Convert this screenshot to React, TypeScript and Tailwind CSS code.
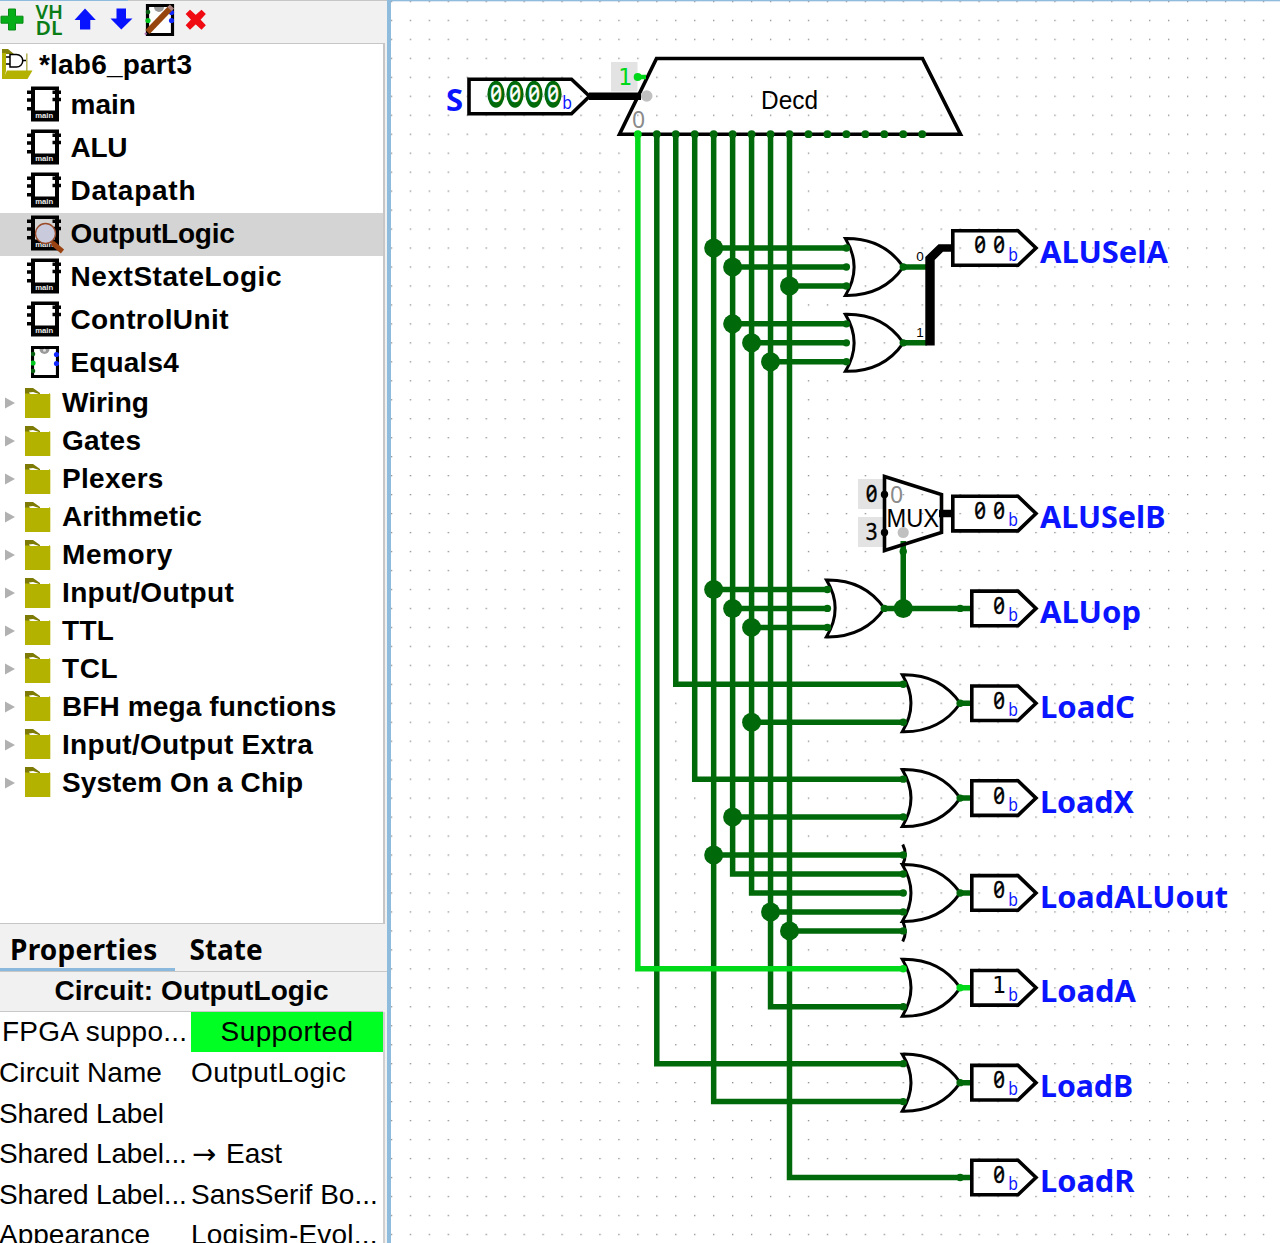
import React from "react";

const GREEN = "#00690a";
const LIME = "#00d81a";
const BLUE = "#0a14ff";

const gx = (k: number) => 391.4 + 18.957 * k;
const gy = (k: number) => 1.4 + 18.969 * k;

/* ---------- sidebar icons ---------- */

function ChipIcon({ lens = false }: { lens?: boolean }) {
  return (
    <svg width="40" height="40" viewBox="0 0 40 40" className="block shrink-0">
      <path d="M4 1.500h28v35H4z" fill="#000" />
      <path d="M8 5h20v20.500H8z" fill={lens ? "#d4d4d4" : "#fff"} />
      <path d="M0 7.300h5M0 15h5M0 23.700h5M25.500 7.300h8.500M25.500 14.500h8.500" stroke="#000" strokeWidth="3.600" />
      <text x="17.200" y="32.700" textAnchor="middle" fontFamily="Liberation Sans" fontWeight="700" fontSize="8" textLength="18" lengthAdjust="spacingAndGlyphs" fill="#eee">
        main
      </text>
      {lens && (
        <g>
          <path d="M25.500 29l10 8.500" stroke="#9a4312" strokeWidth="5" />
          <path d="M23 26.500l5 4" stroke="#9a4312" strokeWidth="3" />
          <circle cx="18.500" cy="19.500" r="10" fill="#c9cbdc" stroke="#9a4a28" strokeWidth="1.300" />
        </g>
      )}
    </svg>
  );
}

function VhdlChip() {
  return (
    <svg width="28" height="32" viewBox="0 0 28 32" className="block shrink-0">
      <path d="M1.500 1.500h25v29h-25z" fill="#fff" stroke="#000" strokeWidth="3.200" />
      <path d="M8.500 3a5 5 0 0 0 10 0z" fill="#999" />
      <circle cx="13.500" cy="4.300" r="1.500" fill="#ddd" />
      <circle cx="2" cy="8" r="2.300" fill="#075f12" />
      <circle cx="2" cy="17" r="2.600" fill="#00c81e" />
      <circle cx="2" cy="25" r="2.300" fill="#075f12" />
      <circle cx="25.500" cy="8.500" r="2.600" fill="#1028ff" />
      <circle cx="25.500" cy="17.500" r="2.600" fill="#1028ff" />
    </svg>
  );
}

function FolderIcon() {
  return (
    <svg width="26" height="31" viewBox="0 0 26 31" className="block shrink-0">
      <path d="M0 0h8l7 5v3H0z" fill="#7d7a05" />
      <path d="M4 4.500l4-.5 6 2-9 .5z" fill="#fff" />
      <path d="M0 5.500h3l3 .5h18l.5-1 .8 1V30H0z" fill="#b4b200" />
    </svg>
  );
}

function ProjectIcon() {
  return (
    <svg width="32" height="32" viewBox="0 0 32 32" className="block shrink-0">
      <path d="M0 1h6l6 5v17H0z" fill="#85820a" />
      <path d="M4 6h20v18H4z" fill="#fff" />
      <path d="M24.800 5.500V24" stroke="#b9b660" strokeWidth="1.600" />
      <path d="M0 31V5h4v18l-2 8z" fill="#b4b200" />
      <path d="M5 22.500h25.500L25.500 31H1z" fill="#b4b200" />
      <path d="M8 6.500h6.500a6 6 0 0 1 0 12.500H8z" fill="#fff" stroke="#000" strokeWidth="1.500" />
      <path d="M4 9h4M4 16h4M20.500 12.500H24" stroke="#000" strokeWidth="1.400" />
    </svg>
  );
}

function Toolbar() {
  return (
    <svg width="384" height="42" viewBox="0 0 384 42" className="block">
      <path d="M8.500 8h7v7.200h7.500v7h-7.500V29h-7v-6.800H1v-7h7.500z" fill="#06ae18" stroke="#078a14" strokeWidth="1" />
      <g fontFamily="Noto Sans" fontWeight="600" fontSize="19" fill="#0a7d17">
        <text x="35.500" y="17.500" textLength="27.500" lengthAdjust="spacingAndGlyphs">VH</text>
        <text x="35.500" y="33.500" textLength="27" lengthAdjust="spacingAndGlyphs">DL</text>
      </g>
      <path d="M85 7.500L95.800 19h-5.500v9.500H80V19h-5.500z" fill="#0712ff" />
      <path d="M121.300 28.500L110.500 17.500h6V7.500H126v10h6.500z" fill="#0712ff" />
      <g transform="translate(146 3)">
        <path d="M1.500 1.500h25v29h-25z" fill="#fff" stroke="#000" strokeWidth="3.200" />
        <path d="M8 3a5 5 0 0 0 10 0z" fill="#999" />
        <circle cx="2" cy="8" r="2.300" fill="#075f12" />
        <circle cx="2" cy="16.500" r="2.600" fill="#00c81e" />
        <circle cx="25.500" cy="8.500" r="2.600" fill="#1028ff" />
        <circle cx="25.500" cy="16.500" r="2.600" fill="#1028ff" />
        <path d="M1.500 28L24.500 4" stroke="#96450f" strokeWidth="6" />
        <path d="M23.500 5l2.500-2.500" stroke="#a9807c" strokeWidth="6" />
        <path d="M-1 30.500l1.500-1.500" stroke="#b06ab0" strokeWidth="2" />
      </g>
      <path d="M190 9.500L195.700 14.800L201.500 9.500L205 13L199.800 18.700L205 24.300L201.500 27.800L195.700 22.500L190 27.800L186.500 24.300L191.700 18.700L186.500 13z" fill="#f00a12" stroke="#f00a12" strokeWidth="1.200" />
    </svg>
  );
}

/* ---------- sidebar ---------- */

/* name and letter spacing in px */
const circuits: [string, number][] = [
  ["main", 0],
  ["ALU", -0.3],
  ["Datapath", 0.75],
  ["OutputLogic", -0.2],
  ["NextStateLogic", 0.55],
  ["ControlUnit", 0.4],
  ["Equals4", 0.15],
];

const libraries: [string, number][] = [
  ["Wiring", 0], ["Gates", 0.3], ["Plexers", 0.3], ["Arithmetic", 0.15], ["Memory", 0.6],
  ["Input/Output", 0.35], ["TTL", 0.3], ["TCL", 0.6], ["BFH mega functions", 0.12],
  ["Input/Output Extra", 0.3], ["System On a Chip", 0.1],
];

function Tree() {
  return (
    <div className="h-[881px] w-[385px] shrink-0 overflow-hidden border-y border-r-2 border-[#c6c6c6] bg-white text-[28px] font-bold leading-none text-black">
      <div className="flex h-[39.500px] items-center pl-[2px]">
        <ProjectIcon />
        <span className="ml-[5px] pt-[2px] tracking-[0.2px]">*lab6_part3</span>
      </div>
      {circuits.map(([name, ls]) => (
        <div
          key={name}
          className={name === "OutputLogic" ? "flex h-[43px] items-center bg-[#d4d4d4]" : "flex h-[43px] items-center"}
        >
          <div className="flex w-[70.500px] shrink-0 pl-[27px]">
            {name === "Equals4" ? <div className="pb-[3px] pl-[4px]"><VhdlChip /></div> : <ChipIcon lens={name === "OutputLogic"} />}
          </div>
          <span style={{ letterSpacing: ls }}>{name}</span>
        </div>
      ))}
      {libraries.map(([name, ls]) => (
        <div key={name} className="flex h-[37.930px] items-center">
          <svg width="25" height="12" viewBox="0 0 25 12" className="block shrink-0">
            <path d="M5 0.500v11l10-5.500z" fill="#b1b1b1" />
          </svg>
          <FolderIcon />
          <span className="ml-[11px]" style={{ letterSpacing: ls }}>{name}</span>
        </div>
      ))}
    </div>
  );
}

/* key, its letter spacing, value, its letter spacing */
const props: [string, number, string, number][] = [
  ["Circuit Name", 0.1, "OutputLogic", 0.4],
  ["Shared Label", -0.15, "", 0],
  ["Shared Label...", -0.15, "→ East", 0],
  ["Shared Label...", -0.15, "SansSerif Bo...", 0],
  ["Appearance", 0, "Logisim-Evol...", 0.2],
];

function Value({ text, spacing }: { text: string; spacing: number }) {
  if (!text.startsWith("→")) return <span style={{ letterSpacing: spacing }}>{text}</span>;
  return (
    <span className="flex items-center">
      <span className="ml-px w-[34px] font-['DejaVu_Sans'] text-[29px]">→</span>
      <span>{text.slice(2)}</span>
    </span>
  );
}

function Properties() {
  return (
    <div className="flex flex-1 flex-col overflow-hidden text-black">
      <div className="flex h-[47.500px] shrink-0 border-b border-[#c8c8c8] font-['Noto_Sans'] text-[28px] font-bold leading-[50px]">
        <div className="h-[47px] w-[174.500px] border-b-[3px] border-[#8bb9dd] pl-[10px] tracking-[0.25px]">Properties</div>
        <div className="pl-[15px]">State</div>
      </div>
      <div className="flex h-[40px] w-[383px] shrink-0 items-center justify-center border-b border-[#c8c8c8] text-[28px] font-bold leading-none tracking-[0.1px]">
        Circuit: OutputLogic
      </div>
      <div className="w-[385px] border-r-2 border-[#d0d0d0] bg-white text-[28px] leading-none">
        <div className="flex h-[40.500px]">
          <div className="flex w-[191px] items-center whitespace-nowrap pl-[2px] tracking-[0.25px]">FPGA suppo...</div>
          <div className="flex flex-1 items-center justify-center bg-[#00ff22] tracking-[0.4px]">Supported</div>
        </div>
        {props.map(([k, kls, v, vls], i) => (
          <div key={i} className="flex h-[40.500px] items-center whitespace-nowrap pt-[2px]">
            <div className="w-[191px] shrink-0"><span className="-ml-px" style={{ letterSpacing: kls }}>{k}</span></div>
            <Value text={v} spacing={vls} />
          </div>
        ))}
      </div>
    </div>
  );
}

/* ---------- circuit drawing ---------- */

function Digit({ x, y, ch, fill = "#000" }: { x: number; y: number; ch: string; fill?: string }) {
  if (ch === "1") {
    return (
      <text x={x} y={y} textAnchor="middle" fontFamily="DejaVu Sans Mono" fontSize="23" fill={fill}>1</text>
    );
  }
  return (
    <text x={0} y={0} transform={`translate(${x} ${y}) scale(0.87 1)`} textAnchor="middle" fontFamily="Noto Sans" fontSize="23.500" fill={fill} stroke={fill} strokeWidth="0.400" style={{ fontFeatureSettings: '"zero"' }}>
      {ch}
    </text>
  );
}

function RadixMark({ x, y }: { x: number; y: number }) {
  return (
    <text x={0} y={0} transform={`translate(${x} ${y}) scale(0.9 1)`} textAnchor="middle" fontFamily="Noto Sans" fontSize="17.500" fill={BLUE}>b</text>
  );
}

function OutPin({ row, value, label, width }: { row: number; value: string; label: string; width: number }) {
  const y = gy(row);
  const left = value.length === 2 ? 952.8 : 971.8;
  return (
    <g>
      <path d={`M${left} ${y - 17.3}H1018L1036 ${y}L1018 ${y + 17.3}H${left}z`} fill="none" stroke="#000" strokeWidth="3.600" />
      {value.split("").map((c, i) => (
        <Digit key={i} x={999 - 19 * (value.length - 1 - i)} y={y + 5.5} ch={c} />
      ))}
      <RadixMark x={1013} y={y + 12.8} />
      <text x="1040" y={y + 14.7} textLength={width} lengthAdjust="spacingAndGlyphs" fontFamily="Noto Sans" fontWeight="700" fontSize="30" fill={BLUE}>
        {label}
      </text>
    </g>
  );
}

function OrGate({ col, row, out, extended = false, hot = false }: { col: number; row: number; out: number[]; extended?: boolean; hot?: boolean }) {
  const x = gx(col);
  const y = gy(row);
  const tip = x + 57;
  return (
    <g>
      <path d={`M${x - 1} ${y - 28.5}C${x + 28} ${y - 29} ${x + 46} ${y - 16} ${tip} ${y}C${x + 46} ${y + 16} ${x + 28} ${y + 29} ${x - 1} ${y + 28.5}Q${x + 16.5} ${y} ${x - 1} ${y - 28.5}z`} fill="none" stroke="#000" strokeWidth="3" />
      {extended && (
        <path d={`M${x - 0.5} ${y - 48.5}Q${x + 4.5} ${y - 39} ${x - 0.5} ${y - 28.5}M${x - 0.5} ${y + 48.5}Q${x + 4.5} ${y + 39} ${x - 0.5} ${y + 28.5}`} fill="none" stroke="#000" strokeWidth="3" />
      )}
      {out.map((d) => (
        <circle key={d} cx={x} cy={gy(row + d)} r="3.700" fill={hot && d < 0 ? LIME : GREEN} />
      ))}
      <circle cx={gx(col + 3)} cy={y} r="3.700" fill={hot ? LIME : GREEN} />
    </g>
  );
}

const H = (a: number, b: number, r: number) => `M${gx(a)} ${gy(r)}H${gx(b)}`;

const wires = [
  `M${gx(14)} ${gy(7)}V${gy(56)}H${gx(27)}`,
  `M${gx(15)} ${gy(7)}V${gy(36)}H${gx(27)}`,
  `M${gx(16)} ${gy(7)}V${gy(41)}H${gx(27)}`,
  `M${gx(17)} ${gy(7)}V${gy(58)}H${gx(27)}`,
  `M${gx(18)} ${gy(7)}V${gy(46)}H${gx(27)}`,
  `M${gx(19)} ${gy(7)}V${gy(47)}H${gx(27)}`,
  `M${gx(20)} ${gy(7)}V${gy(53)}H${gx(27)}`,
  `M${gx(21)} ${gy(7)}V${gy(62)}H971`,
  H(17, 24, 13), H(18, 24, 14), H(21, 24, 15),
  H(18, 24, 17), H(19, 24, 18), H(20, 24, 19),
  H(17, 23, 31), H(18, 23, 32), H(19, 23, 33),
  H(19, 27, 38), H(18, 27, 43), H(17, 27, 45), H(20, 27, 48), H(21, 27, 49),
  `M${gx(27)} ${gy(14)}H927`, `M${gx(27)} ${gy(18)}H927`,
  `M${gx(26)} ${gy(32)}H971`,
  `M${gx(27)} ${gy(32)}V541`,
  `M${gx(30)} ${gy(37)}H971`, `M${gx(30)} ${gy(42)}H971`,
  `M${gx(30)} ${gy(47)}H971`, `M${gx(30)} ${gy(57)}H971`,
].join("");

const junctions: [number, number][] = [
  [17, 13], [18, 14], [21, 15], [18, 17], [19, 18], [20, 19], [17, 31], [18, 32],
  [19, 33], [27, 32], [19, 38], [18, 43], [17, 45], [20, 48], [21, 49],
];

const outputs: [number, string, string, number][] = [
  [13, "00", "ALUSelA", 128], [27, "00", "ALUSelB", 125.500], [32, "0", "ALUop", 101],
  [37, "0", "LoadC", 95], [42, "0", "LoadX", 94], [47, "0", "LoadALUout", 188],
  [52, "1", "LoadA", 96], [57, "0", "LoadB", 93], [62, "0", "LoadR", 94.500],
];

function Canvas() {
  return (
    <svg width="889" height="1243" viewBox="391 0 889 1243" className="block">
      <defs>
        <pattern id="grid" x={gx(0) - 0.6} y={gy(0) - 0.6} width="18.957" height="18.969" patternUnits="userSpaceOnUse">
          <rect width="1.300" height="1.300" fill="#858585" />
        </pattern>
      </defs>
      <rect x="391" y="0" width="889" height="1243" fill="url(#grid)" />
      <rect x="391" y="0" width="889" height="1.300" fill="#8fbbdc" />

      {/* constants feeding the plexers */}
      <g fill="#e3e3e3">
        <rect x="611" y="62" width="26.500" height="29.500" />
        <rect x="858" y="479" width="26" height="30" />
        <rect x="858" y="517" width="26" height="30" />
      </g>

      <path d={wires} fill="none" stroke={GREEN} strokeWidth="5.500" />
      <path d={`M${gx(13)} ${gy(7)}V${gy(51)}H${gx(27)}M${gx(30)} ${gy(52)}H971`} fill="none" stroke={LIME} strokeWidth="5.500" />

      {/* decoder */}
      <path d="M656.500 58.500H922.500L960.500 134.200H619.500z" fill="none" stroke="#000" strokeWidth="3.600" />
      <path d="M637.700 77H646" stroke={LIME} strokeWidth="4.500" />
      <circle cx="637.700" cy="77" r="4" fill={LIME} />
      <circle cx="646.700" cy="96" r="5.800" fill="#c0c0c0" />
      <path d="M589 96.200H641" stroke="#000" strokeWidth="7.500" />
      <text x="789.500" y="109" textAnchor="middle" fontFamily="Liberation Sans" fontSize="25" textLength="57" lengthAdjust="spacingAndGlyphs">Decd</text>
      <text x="638.500" y="128" textAnchor="middle" fontFamily="Noto Sans" fontSize="23" fill="#8a8a8a">0</text>
      <text x="625" y="84.500" textAnchor="middle" fontFamily="DejaVu Sans Mono" fontSize="23" fill={LIME}>1</text>
      {Array.from({ length: 16 }, (_, i) => (
        <circle key={i} cx={gx(13 + i)} cy={gy(7)} r="3.900" fill={i === 0 ? LIME : GREEN} />
      ))}

      {/* selector input */}
      <path d="M469 79.200H571.500L589.500 96.200L571.500 113.800H469z" fill="none" stroke="#000" strokeWidth="3.600" />
      {[496, 515, 534, 553].map((x) => (
        <g key={x}>
          <ellipse cx={x} cy="94.200" rx="8.600" ry="13.500" fill={GREEN} />
          <Digit x={x} y={102} ch="0" fill="#fff" />
        </g>
      ))}
      <RadixMark x={567} y={109} />
      <text x="446" y="111" fontFamily="Noto Sans" fontWeight="700" fontSize="31" fill={BLUE}>S</text>

      {junctions.map(([a, b]) => (
        <circle key={`${a}-${b}`} cx={gx(a)} cy={gy(b)} r="9.500" fill={GREEN} />
      ))}
      <circle cx={gx(30)} cy={gy(32)} r="3.700" fill={GREEN} />
      <circle cx={gx(30)} cy={gy(62)} r="3.700" fill={GREEN} />

      <OrGate col={24} row={14} out={[-1, 0, 1]} />
      <OrGate col={24} row={18} out={[-1, 0, 1]} />
      <OrGate col={23} row={32} out={[-1, 0, 1]} />
      <OrGate col={27} row={37} out={[-1, 1]} />
      <OrGate col={27} row={42} out={[-1, 1]} />
      <OrGate col={27} row={47} out={[-2, -1, 0, 1, 2]} extended />
      <OrGate col={27} row={52} out={[-1, 1]} hot />
      <OrGate col={27} row={57} out={[-1, 1]} />

      {/* splitter */}
      <path d="M925.300 345.500V257L938.500 244.200H952V251.800H943L934.700 260V345.500z" fill="#000" />
      <text x="920" y="261" textAnchor="middle" fontFamily="Liberation Sans" fontSize="13.500">0</text>
      <text x="920" y="337" textAnchor="middle" fontFamily="Liberation Sans" fontSize="13.500">1</text>

      {/* multiplexer */}
      <circle cx="903.200" cy="532.500" r="5.600" fill="#c0c0c0" />
      <text x="896.500" y="503" textAnchor="middle" fontFamily="Noto Sans" fontSize="23" fill="#8a8a8a">0</text>
      <circle cx={gx(27)} cy={gy(29)} r="3.700" fill={GREEN} />
      <path d="M884.500 476.500L941.500 494.500V532.500L884.500 550.500z" fill="none" stroke="#000" strokeWidth="3.600" />
      <circle cx="884.500" cy="494.500" r="3.700" />
      <circle cx="884.500" cy="532.500" r="3.700" />
      <path d="M939 513.500H953" stroke="#000" strokeWidth="7.500" />
      <text x="886.500" y="526.500" fontFamily="Liberation Sans" fontSize="25" textLength="52.500" lengthAdjust="spacingAndGlyphs">MUX</text>
      <Digit x={871.5} y={502} ch="0" />
      <Digit x={871.5} y={540} ch="3" />

      {outputs.map(([row, value, label, width]) => (
        <OutPin key={label} row={row} value={value} label={label} width={width} />
      ))}
    </svg>
  );
}

export default function App() {
  return (
    <div className="flex h-[1243px] w-[1280px] overflow-hidden bg-white font-['Liberation_Sans',sans-serif]">
      <aside className="flex w-[387px] shrink-0 flex-col bg-[#f1f1f1]">
        <div className="flex h-px shrink-0">
          <div className="w-[128px] bg-[#8fbbdc]" />
          <div className="flex-1 bg-[#c6c6c6]" />
        </div>
        <div className="h-[42px] shrink-0">
          <Toolbar />
        </div>
        <Tree />
        <Properties />
      </aside>
      <div className="w-[4px] shrink-0 bg-[#8fbbdc]" />
      <main className="flex-1">
        <Canvas />
      </main>
    </div>
  );
}
